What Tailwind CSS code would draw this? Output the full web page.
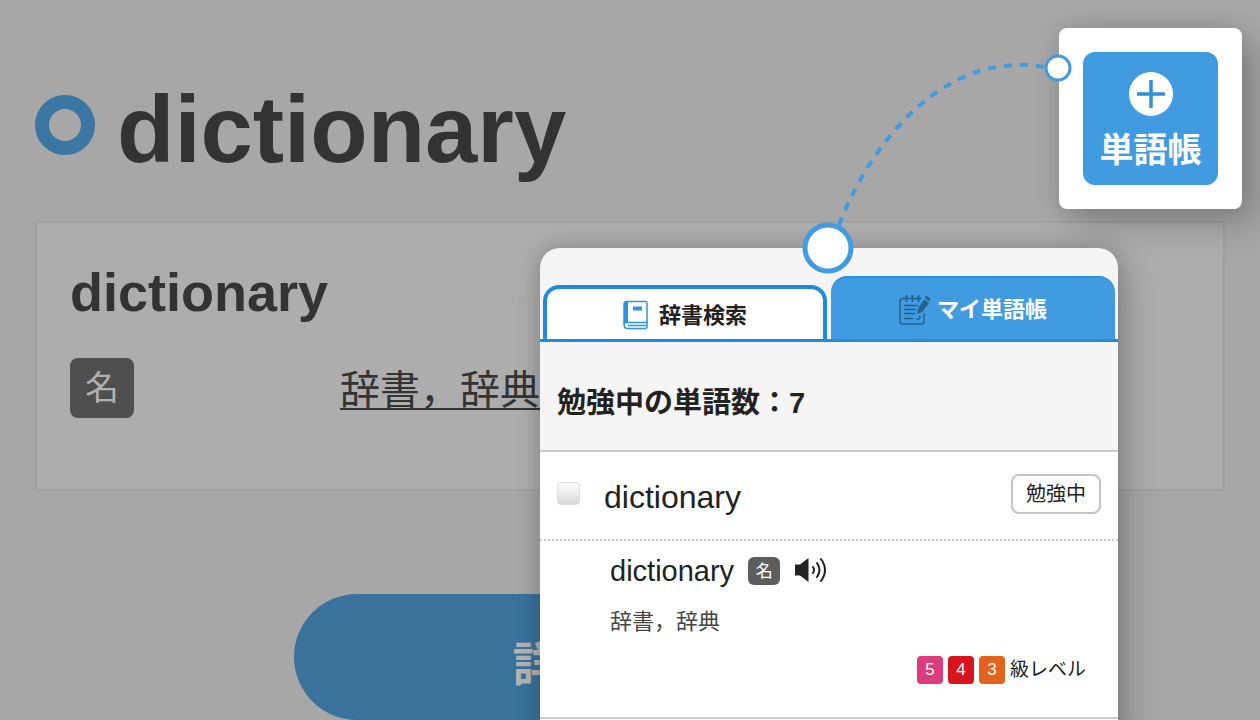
<!DOCTYPE html>
<html lang="ja">
<head>
  <meta charset="UTF-8">
  <meta name="viewport" content="width=device-width, initial-scale=1">
  <title>dictionary</title>
  <script src="https://cdn.jsdelivr.net/npm/@tailwindcss/browser@4"></script>
</head>
<body class="relative min-h-screen overflow-hidden bg-[#a7a7a7] font-['Liberation_Sans','Noto_Sans_CJK_JP',sans-serif] text-[#333]">

  <!-- Page behind the popup -->
  <main class="px-[35px] pt-[76px]">
    <div class="flex items-start gap-[22px]">
      <span class="mt-[19px] size-[60px] shrink-0 rounded-full border-[14px] border-[#3c76a2]"></span>
      <h1 class="text-[94px] leading-[108px] font-bold">dictionary</h1>
    </div>

    <section class="mt-[37px] border-2 border-[#a0a0a0] bg-[#adadad] px-[33px] pt-[39px] pb-[71px]">
      <h2 class="text-[54px] leading-[60px] font-bold">dictionary</h2>
      <div class="mt-[36px] flex h-[60px] items-center">
        <div class="w-[270px] shrink-0">
          <span class="flex h-[60px] w-[64px] items-center justify-center rounded-lg bg-[#4f4f4f] text-[34px] leading-none text-[#b0b0b0]">名</span>
        </div>
        <a href="#" class="pt-1 text-[40px] leading-[60px] whitespace-nowrap underline decoration-2 underline-offset-4">辞書，辞典</a>
      </div>
    </section>

    <button class="mx-auto mt-[103px] block h-[126px] w-[672px] max-w-full rounded-full bg-[#3b729b] pt-4 text-[47px] font-bold text-[#b4b4b4]">詳しく見る</button>
  </main>

  <!-- Add to wordbook -->
  <div class="absolute top-[28px] right-[18px] rounded-lg bg-white p-6 shadow-[0_0_24px_rgba(0,0,0,0.12),14px_16px_36px_rgba(0,0,0,0.2)]">
    <button class="flex h-[133px] w-[135px] flex-col items-center rounded-xl bg-[#409be0] pt-[20px] text-white">
      <svg class="size-[44px]" viewBox="0 0 44 44">
        <circle cx="22" cy="22" r="22" fill="#fff"/>
        <path d="M22 8v28M8 22h28" stroke="#2f8fdc" stroke-width="3.5"/>
      </svg>
      <span class="mt-[12px] text-[34px] leading-[44px] font-bold">単語帳</span>
    </button>
  </div>

  <!-- Popup -->
  <div class="absolute top-[248px] right-[142px] w-[578px] rounded-t-[20px] bg-[#f5f5f5] text-[#222] shadow-[0_0_24px_rgba(0,0,0,0.2),12px_16px_36px_rgba(0,0,0,0.15)]">
    <div class="grid h-[94px] grid-cols-2 items-end gap-[4px] border-b-[3px] border-[#1f8ade] px-[3px]">
      <button class="flex h-[54px] items-center justify-center gap-[11px] rounded-t-2xl border-4 border-b-0 border-[#1f8ade] bg-white pt-[2px] text-[22px] font-bold">
        <svg class="h-[30px] w-[25px]" viewBox="0 0 25 30" fill="none" stroke="#2b94e3">
          <path d="M3.500 1.500H22.500a1.500 1.500 0 0 1 1.500 1.500V22.500H3.500a2 2 0 0 0-2.500 2V4A2.500 2.500 0 0 1 3.500 1.500Z" stroke-width="1.500"/>
          <path d="M1 2h4v21H1z" fill="#2b94e3" stroke="none"/>
          <path d="M1 24q0 4.500 3.500 4.500H22q2 0 2-2v-4M5 25.500h18" stroke-width="1.500"/>
          <path d="M10 8.500h9" stroke-width="4"/>
        </svg>
        辞書検索
      </button>
      <button class="flex h-[63px] items-center justify-center gap-[7px] rounded-t-2xl border-t-2 border-[#2a8fdd] bg-[#409be0] pt-[2px] text-[22px] font-bold text-white">
        <svg class="h-[30px] w-[31px]" viewBox="0 0 31 30" fill="none" stroke="#24618f" stroke-width="1.500" stroke-linecap="round" stroke-linejoin="round">
          <path d="M22 3.500H4Q1 3.500 1 6.500V26q0 3 3 3h18q3 0 3-3v-7"/>
          <path d="M7.500 1v5M13.500 1v5M19.500 1v5" stroke-width="2"/>
          <path d="M5.500 10.500h13M5.500 14.500h11M5.500 18.500h10M5.500 23.500h8M18 24q3 1 3-3"/>
          <path d="M19 18l1-4.500 5.500-8 3.500 2.500-6 8Z" fill="#24618f"/>
          <path d="M27.500 2.500l2.500 2" stroke-width="3"/>
        </svg>
        マイ単語帳
      </button>
    </div>

    <p class="flex h-[110px] items-center border-b-2 border-[#ccc] px-[17px] pt-[16px] text-[29px] font-bold">勉強中の単語数：7</p>

    <div class="bg-white">
      <div class="flex h-[89px] items-center border-b-2 border-dotted border-[#ccc] px-[17px]">
        <input id="word" type="checkbox" class="mb-1 size-[23px] appearance-none rounded-sm border border-[#ddd] bg-linear-to-b from-white to-[#d8d8d8]">
        <label for="word" class="ml-[24px] pt-[2px] text-[32px]">dictionary</label>
        <button class="ml-auto mb-1 h-[40px] w-[90px] rounded-lg border-2 border-[#c4c4c4] bg-white text-[20px] leading-none">勉強中</button>
      </div>

      <div class="border-b-2 border-[#ccc] pt-[12px] pr-[32px] pb-[31px] pl-[70px]">
        <div class="flex h-[36px] items-center">
          <span class="text-[29px] leading-[36px]">dictionary</span>
          <span class="ml-[14px] flex h-[28px] w-[32px] items-center justify-center rounded-md bg-[#5d5d5d] text-[17px] leading-none text-white">名</span>
          <button class="ml-[14px]" aria-label="play">
            <svg class="h-[28px] w-[34px]" viewBox="0 0 34 28" fill="none" stroke="#222" stroke-width="2" stroke-linecap="round">
              <path d="M1 7.500h5L14.500 1v24L6 18.500H1Z" fill="#222" stroke="none"/>
              <path d="M19 10q2 3 0 6M23 6q5 7 0 14M27 2q8 11 0 22"/>
            </svg>
          </button>
        </div>
        <p class="mt-[17px] text-[22px] leading-[32px] text-[#444]">辞書，辞典</p>
        <div class="mt-[16px] flex items-center justify-end gap-[5px] text-[19px] leading-[32px]">
          <span class="flex h-[28px] w-[26px] items-center justify-center rounded bg-[#dc3c7c] text-[17px] text-white">5</span>
          <span class="flex h-[28px] w-[26px] items-center justify-center rounded bg-[#d9141c] text-[17px] text-white">4</span>
          <span class="flex h-[28px] w-[26px] items-center justify-center rounded bg-[#e5621c] text-[17px] text-white">3</span>
          <span>級レベル</span>
        </div>
      </div>
      <div class="h-[20px]"></div>
    </div>
  </div>

  <!-- Connector from the button to the popup -->
  <svg class="pointer-events-none absolute top-[50px] right-[180px] h-[230px] w-[300px]" viewBox="0 0 300 230" fill="none" stroke="#409be0">
    <path d="M59 175C92 90 165 0 265 17" stroke-width="4" stroke-dasharray="8 8"/>
    <circle cx="48" cy="198" r="23" fill="#fff" stroke-width="5"/>
    <circle cx="278" cy="18" r="12" fill="#fff" stroke-width="3"/>
  </svg>

</body>
</html>
